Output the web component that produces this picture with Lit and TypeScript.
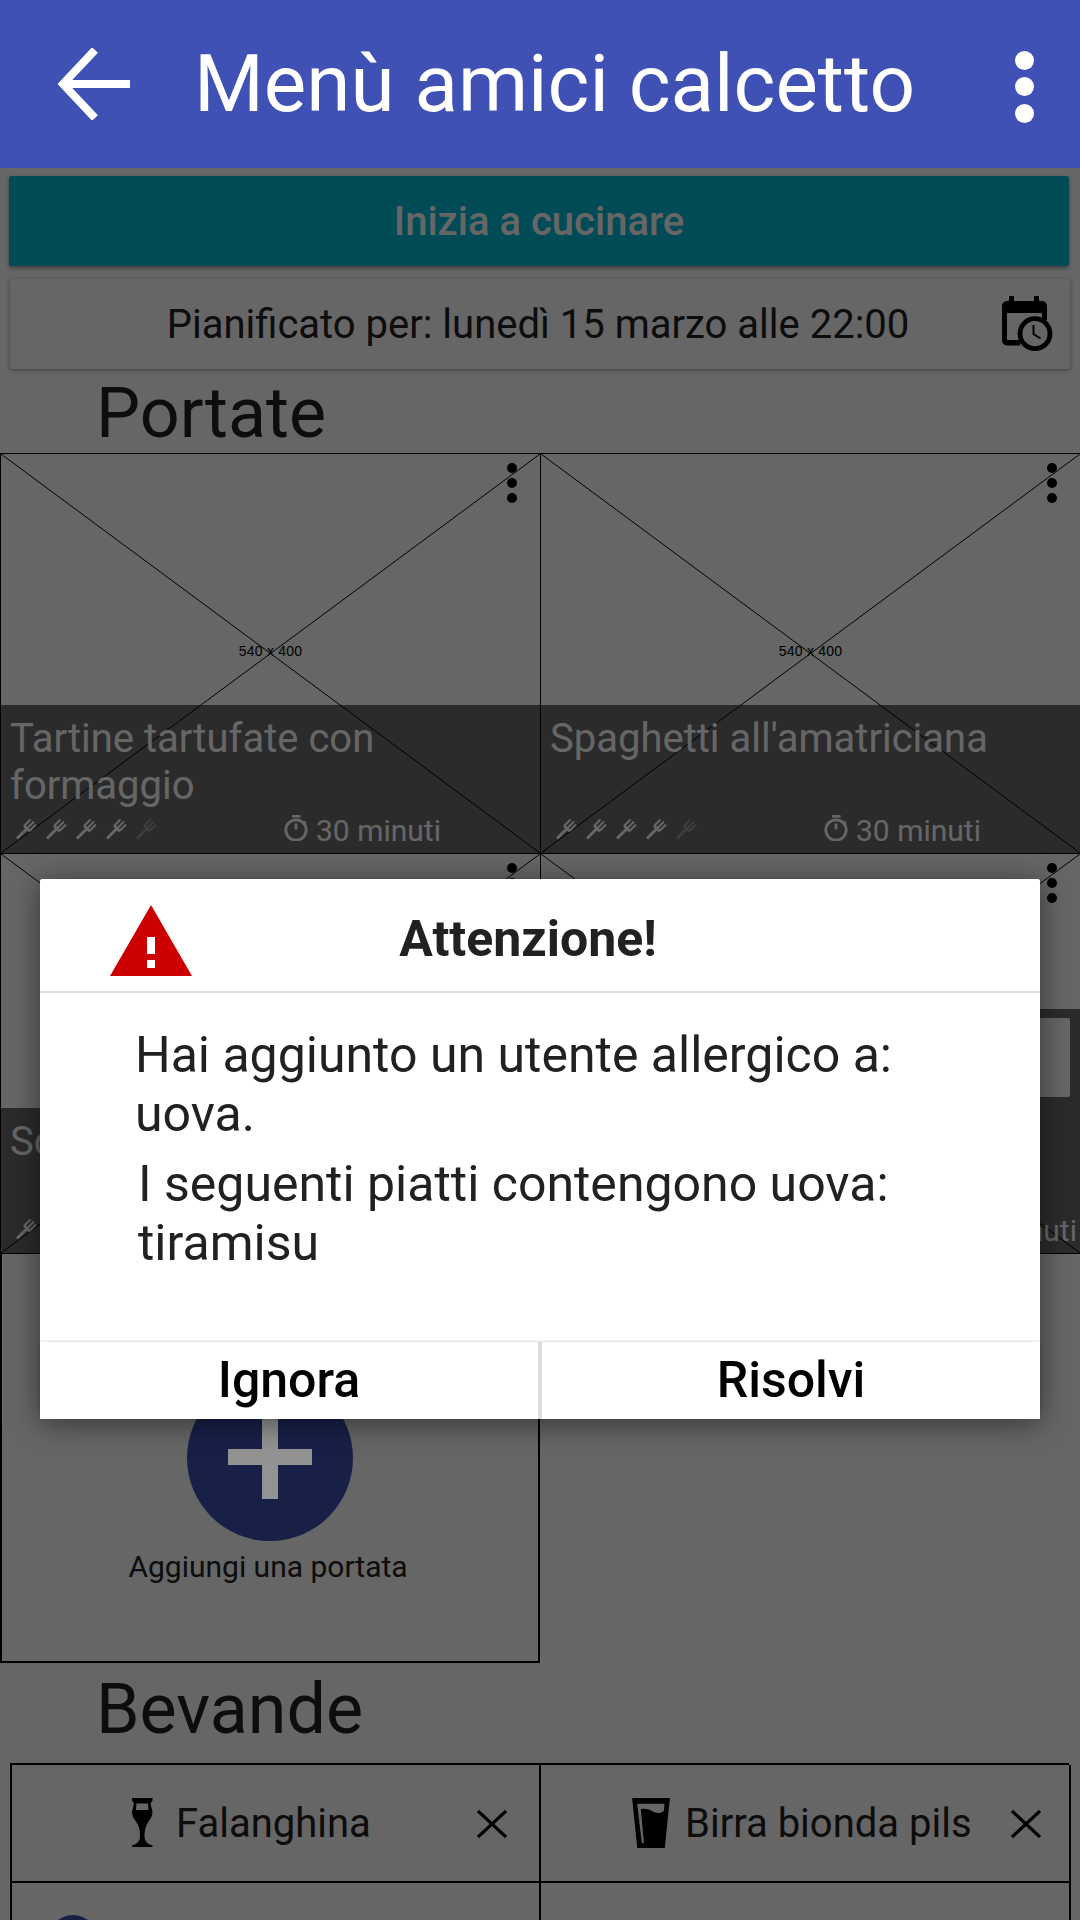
import { LitElement, html, css, svg } from "lit";
import { customElement } from "lit/decorators.js";

const fork = (dim = false) => html`<svg class="fork ${dim ? "dim" : ""}" viewBox="0 0 24 24" width="24" height="24" fill="none" stroke="currentColor">
  <path stroke-width="3" d="M2 22.500 12.500 12M9.300 9.800 14.800 15.300"/>
  <path stroke-width="2" d="M9 10 15.500 3.500M12 12.500 19 5.500M14.500 15 21 8.500"/>
</svg>`;

const timer = html`<svg class="timer" viewBox="0 0 24 26" width="24" height="26" fill="none" stroke="currentColor">
  <circle cx="12" cy="15" r="10.200" stroke-width="2.800"/>
  <path stroke-width="2.800" d="M8 1.400h8.500M12 8.500v6"/>
  <path stroke-width="2" d="M20 6.500l2 2"/>
</svg>`;

const placeholder = svg`<svg class="ph" viewBox="0 0 100 100" preserveAspectRatio="none">
  <line x1="0" y1="0" x2="100" y2="100" vector-effect="non-scaling-stroke"/>
  <line x1="100" y1="0" x2="0" y2="100" vector-effect="non-scaling-stroke"/>
</svg>`;

const close = html`<svg class="x" width="30" height="28" viewBox="0 0 30 28" stroke="#000" stroke-width="3.200"><path d="M1 1l28 26M29 1 1 27"/></svg>`;

@customElement("app-root")
export class AppRoot extends LitElement {
  static styles = css`
    :host {
      display: block;
      position: relative;
      width: 1080px;
      height: 1920px;
      overflow: hidden;
      background: #fff;
      font-family: Roboto, sans-serif;
      color: #212121;
    }
    .bar {
      position: relative;
      z-index: 3;
      height: 168px;
      background: #3f51b5;
      color: #fff;
      display: flex;
      align-items: center;
      box-sizing: border-box;
      padding: 0 46px 0 58px;
    }
    .bar h1 {
      flex: 1;
      margin: 0 0 0 64px;
      font-size: 80px;
      font-weight: 400;
      line-height: 168px;
      white-space: nowrap;
    }
    .bar .dots { display: grid; gap: 7.500px; margin-top: 5px; }
    .bar .dots i { width: 19px; height: 19px; border-radius: 50%; background: #fff; }
    .content { padding-top: 8px; }
    .start {
      margin: 0 11px 0 9px;
      height: 90px;
      border-radius: 2px;
      background: #00bcd4;
      color: #fff;
      font-size: 40px;
      font-weight: 500;
      display: flex;
      align-items: center;
      justify-content: center;
      box-shadow: 0 2px 4px rgba(0, 0, 0, 0.4);
    }
    .plan {
      position: relative;
      margin: 13px 10px 0;
      height: 90px;
      border-radius: 2px;
      font-size: 40px;
      display: flex;
      align-items: center;
      justify-content: center;
      padding-right: 4px;
      box-sizing: border-box;
      box-shadow: 0 1px 4px rgba(0, 0, 0, 0.4);
    }
    .plan svg { position: absolute; right: 16px; top: 17px; }
    h2 {
      margin: 0 0 0 96px;
      padding-top: 5px;
      font-size: 70px;
      font-weight: 400;
      line-height: 79px;
    }
    .tiles {
      display: grid;
      grid-template-columns: 540px 540px;
      grid-auto-rows: 400px;
    }
    .tile {
      position: relative;
      box-sizing: border-box;
      border: 1px solid #000;
      margin-right: -1px;
      margin-bottom: -1px;
      overflow: hidden;
      background: #fff;
    }
    .ph { position: absolute; inset: 0; width: 100%; height: 100%; }
    .ph line { stroke: #000; stroke-width: 1; }
    .size {
      position: absolute;
      left: 0;
      right: 0;
      top: 189px;
      text-align: center;
      font: 14px "Liberation Sans", sans-serif;
      letter-spacing: 0.2px;
      color: #000;
    }
    .more {
      position: absolute;
      left: 506px;
      top: 9px;
      display: grid;
      gap: 5px;
    }
    .more i { width: 10px; height: 10px; border-radius: 50%; background: #000; }
    .over {
      position: absolute;
      left: 0;
      right: 0;
      bottom: 0;
      background: rgba(0, 0, 0, 0.58);
      color: #fff;
      padding: 10px 10px 0 9px;
      box-sizing: border-box;
      display: flex;
      flex-direction: column;
    }
    .over .name { font-size: 40px; line-height: 47px; flex: 1; min-height: 0; }
    .meta {
      display: flex;
      align-items: center;
      flex: none;
      height: 46px;
      font-size: 30px;
      margin-bottom: 2px;
    }
    .forks { display: flex; gap: 6px; width: 269px; padding-left: 5px; color: #fff; flex: none; }
    .fork.dim { opacity: 0.3; }
    .time { display: flex; align-items: center; gap: 8px; white-space: nowrap; }
    .time span { padding-top: 4px; }
    .field {
      height: 79px;
      margin: -1px 0 auto;
      background: #fff;
      border-radius: 2px;
      flex: none;
    }
    .wide .forks { width: 365px; }
    .add {
      width: 540px;
      height: 410px;
      box-sizing: border-box;
      border: 2px solid #000;
      border-top: 0;
      margin-bottom: 2px;
      display: flex;
      flex-direction: column;
      align-items: center;
      padding-top: 122px;
      font-size: 30px;
    }
    .add span { margin-right: 4px; }
    .fab {
      width: 166px;
      height: 166px;
      border-radius: 50%;
      background: #3f51b5;
      margin-bottom: 8px;
    }
    .plus {
      position: absolute;
      z-index: 1;
      left: 228px;
      top: 1415px;
      width: 84px;
      height: 84px;
      background:
        linear-gradient(#939393, #939393) center / 16px 84px no-repeat,
        linear-gradient(#939393, #939393) center / 84px 16px no-repeat;
    }
    .drinks {
      display: grid;
      grid-template-columns: 529px 530px;
      grid-auto-rows: 118px;
      margin: 14px 11px 0 10px;
      border-top: 2px solid #000;
      border-left: 2px solid #000;
    }
    .drink {
      position: relative;
      border-right: 2px solid #000;
      border-bottom: 2px solid #000;
      display: flex;
      align-items: center;
      font-size: 40px;
      box-sizing: border-box;
    }
    .drink svg.x { position: absolute; right: 32px; top: 45px; }
    .drink.beer svg.x { right: 28px; }
    .drink.wine { padding-left: 120px; }
    .drink.beer { padding-left: 91px; }
    .drink .g { flex: none; }
    .wine .g { margin-right: 23px; }
    .beer .g { margin-right: 15px; }
    .bottom-dot {
      position: absolute;
      left: 36px;
      top: 32px;
      width: 50px;
      height: 50px;
      border-radius: 50%;
      background: #3f51b5;
    }
    .scrim {
      position: absolute;
      inset: 168px 0 0;
      background: rgba(0, 0, 0, 0.6);
    }
    .dialog {
      position: absolute;
      z-index: 2;
      left: 40px;
      top: 879px;
      width: 1000px;
      height: 540px;
      background: #fff;
      border-radius: 2px;
      box-shadow: 0 4px 30px rgba(0, 0, 0, 0.5);
      display: flex;
      flex-direction: column;
    }
    .head {
      height: 112px;
      border-bottom: 2px solid #e0e0e0;
      box-sizing: content-box;
      display: flex;
      align-items: center;
      justify-content: center;
      position: relative;
      font-size: 50px;
      font-weight: 700;
    }
    .head svg { position: absolute; left: 70px; top: 26px; }
    .head span { margin: 8px 24px 0 0; }
    .body {
      flex: 1;
      padding: 33px 0 0 95px;
      font-size: 50px;
      line-height: 59px;
    }
    .body p { margin: 0 0 11px; width: 800px; }
    .body p + p { margin-left: 3px; }
    .actions {
      display: grid;
      grid-template-columns: 498px 498px;
      gap: 4px;
      height: 77px;
      background: #ddd;
      box-shadow: 0 -1px 2px rgba(0, 0, 0, 0.12);
    }
    .actions div {
      background: #fff;
      display: flex;
      align-items: center;
      justify-content: center;
      font-size: 50px;
      font-weight: 500;
      color: #000;
      padding-bottom: 2px;
      box-sizing: border-box;
    }
  `;

  private tile(name: string, height: number, field = false) {
    return html`<div class="tile ${field ? "wide" : ""}">
      ${placeholder}
      <div class="size">540 x 400</div>
      <div class="more"><i></i><i></i><i></i></div>
      <div class="over" style="height:${height}px">
        ${field ? html`<div class="field"></div>` : html`<div class="name">${name}</div>`}
        <div class="meta">
          <div class="forks">${[0, 1, 2, 3, 4].map((i) => fork(i >= 4))}</div>
          <div class="time">${timer}<span>30 minuti</span></div>
        </div>
      </div>
    </div>`;
  }

  render() {
    return html`
      <div class="bar">
        <svg width="72" height="72" viewBox="0 0 72 72" fill="none" stroke="#fff" stroke-width="8">
          <path d="M72 36H6M37 2 5 36l32 34"/>
        </svg>
        <h1>Menù amici calcetto</h1>
        <div class="dots"><i></i><i></i><i></i></div>
      </div>
      <div class="content">
        <div class="start">Inizia a cucinare</div>
        <div class="plan">
          <span>Pianificato per: lunedì 15 marzo alle 22:00</span>
          <svg width="52" height="56" viewBox="0 0 52 56">
            <path fill="#000" d="M7 0h5v5h20V0h5v5h3a5 5 0 0 1 5 5v14h-5V17H5v27h13v5.500H5a5 5 0 0 1-5-5V10a5 5 0 0 1 5-5h2z"/>
            <circle cx="33" cy="37.700" r="15" fill="none" stroke="#000" stroke-width="4.800"/>
            <path fill="none" stroke="#000" stroke-width="2" d="M31.500 29v9l7 4.500"/>
          </svg>
        </div>
        <h2>Portate</h2>
        <div class="tiles">
          ${this.tile("Tartine tartufate con formaggio", 148)}
          ${this.tile("Spaghetti all'amatriciana", 148)}
          ${this.tile("Scaloppine al limone", 145)}
          ${this.tile("", 244, true)}
        </div>
        <div class="add">
          <div class="fab"></div>
          <span>Aggiungi una portata</span>
        </div>
        <h2>Bevande</h2>
        <div class="drinks">
          <div class="drink wine">
            <svg class="g" width="21" height="50" viewBox="0 0 21 50">
              <path fill="#000" fill-rule="evenodd" d="M0 0H20.500V2.500L18.500 5.500 20.500 14C20.500 20 16 23 14.500 27 13 30 12.500 34 12.500 38 12.500 43 15 46 20.500 47.500V49H0V47.500C5.500 46 8 43 8 38 8 34 7.500 30 6 27 4.500 23 0 20 0 14L2 5.500 0 2.500zM4.500 5.500H16L16.500 12H4z"/>
            </svg>
            Falanghina
            ${close}
          </div>
          <div class="drink beer">
            <svg class="g" width="38" height="50" viewBox="0 0 37 49">
              <path fill="#000" fill-rule="evenodd" d="M0 0h37l-5 49H5zM5 5.700H31.700L31 13C27 15.500 23.500 15 20 13 16 10.500 12 10 8.500 10.800L11.500 44H9.500z"/>
            </svg>
            Birra bionda pils
            ${close}
          </div>
          <div class="drink"><div class="bottom-dot"></div></div>
          <div class="drink"></div>
        </div>
      </div>
      <div class="scrim"></div>
      <div class="plus"></div>
      <div class="dialog">
        <div class="head">
          <svg width="82" height="71" viewBox="0 0 82 71">
            <path fill="#cc0000" d="M41 0l41 71H0z"/>
            <path fill="#fff" d="M37 32h8v17h-8zM37 55h8v8h-8z"/>
          </svg>
          <span>Attenzione!</span>
        </div>
        <div class="body">
          <p>Hai aggiunto un utente allergico a: uova.</p>
          <p>I seguenti piatti contengono uova: tiramisu</p>
        </div>
        <div class="actions"><div>Ignora</div><div>Risolvi</div></div>
      </div>
    `;
  }
}
